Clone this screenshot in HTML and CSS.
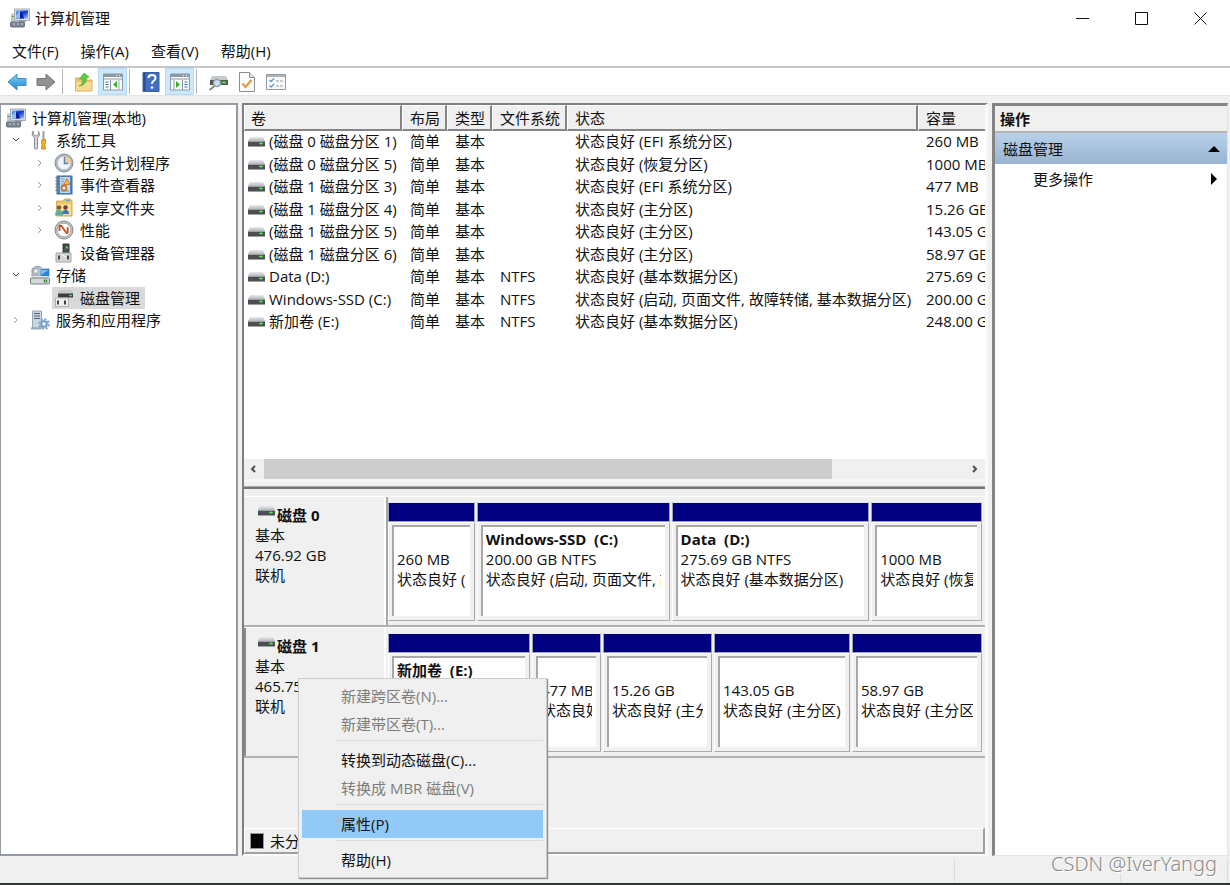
FILE: index.html
```
<!DOCTYPE html>
<html lang="zh-CN">
<head>
<meta charset="utf-8">
<title>计算机管理</title>
<link rel="stylesheet" href="styles.css">
</head>
<body>
<svg class="defs" aria-hidden="true">
  <defs>
    <linearGradient id="g-blue" x1="0" y1="0" x2="1" y2="1"><stop offset="0" stop-color="#7db8f5"/><stop offset=".45" stop-color="#0a2fd0"/><stop offset="1" stop-color="#9ccbf8"/></linearGradient>
    <linearGradient id="g-arrow" x1="0" y1="0" x2="0" y2="1"><stop offset="0" stop-color="#7fd0f8"/><stop offset="1" stop-color="#1f86d8"/></linearGradient>
    <linearGradient id="g-metal" x1="0" y1="0" x2="0" y2="1"><stop offset="0" stop-color="#e8eaec"/><stop offset="1" stop-color="#b4b8bc"/></linearGradient>
  </defs>
  <symbol id="i-computer" viewBox="0 0 20 20">
    <path d="M1 6l4-1v9H1z" fill="#c4c8cc"/><path d="M1.500 8.500h2" stroke="#3ca83c"/>
    <path d="M4.500 1h15v11.500h-15z" fill="#d6dde4" stroke="#a4acb4"/><path d="M6 2.500h12v8H6z" fill="url(#g-blue)"/>
    <path d="M11 2.500l3 8h-5z" fill="#0b1e90"/><path d="M6 7l4-4.500v8H6z" fill="#8fbef2"/>
    <path d="M9 12h7v2H9z" fill="#9aa2aa"/>
    <rect x=".5" y="14" width="14" height="5" rx="1" fill="#7b858f" stroke="#68727c"/><path d="M3 16h2m2 0h2m2 0h2" stroke="#d0d6dc"/>
  </symbol>
  <symbol id="i-tools" viewBox="0 0 20 20">
    <path d="M3 1L2 5l2.500 3v10.500q1.500 1.500 3 0V8L9.500 5 8.500 1v3.500L6 6 3.500 4.500z" fill="#d4d7d9" stroke="#8c9194"/>
    <path d="M13.500 1v9" stroke="#9a9fa4" stroke-width="2"/><path d="M12 9.500h3.500v3l-.5 2 .5 4.500h-4l.5-4.500-.5-2z" fill="#f0ac28" stroke="#d09222"/>
  </symbol>
  <symbol id="i-clock" viewBox="0 0 20 20">
    <circle cx="10" cy="10" r="9" fill="#b7bcc2" stroke="#868d95"/><circle cx="10" cy="10" r="7" fill="#f1f4f8" stroke="#a3adb8"/>
    <path d="M10 10V3a7 7 0 0 1 7 7z" fill="#f6cd96"/><path d="M10.500 4v6.500h4" fill="none" stroke="#5a84b4" stroke-width="1.500"/>
  </symbol>
  <symbol id="i-event" viewBox="0 0 20 20">
    <rect x="3" y="1" width="15" height="18" fill="#4f86b9" stroke="#3f6f9c"/><rect x="6" y="2" width="10" height="16" fill="#c4dcf2"/>
    <path d="M7 4h4M7 6.500h3M7 9h3M7 16h8" stroke="#7d9cbb"/><path d="M1.500 3h3m-3 3h3m-3 3h3m-3 3h3m-3 3h3" stroke="#6e7b88" stroke-width="1.500"/>
    <path d="M13 3.500l3 6h-6z" fill="#f4b64a" stroke="#c98530"/><circle cx="10" cy="13" r="2.500" fill="#fff" stroke="#c4752b" stroke-width="1.800"/>
  </symbol>
  <symbol id="i-share" viewBox="0 0 20 20">
    <path d="M2.500 3h7l1-2h6l1.500 2v15H2.500z" fill="#f2c562" stroke="#d5ab58"/><path d="M3 6h14v11H3z" fill="#fbdd92"/><path d="M12 2.500h4" stroke="#4db0e8" stroke-width="1.500"/>
    <circle cx="5" cy="9.500" r="2.200" fill="#7e5c35"/><circle cx="11.500" cy="9.500" r="2.200" fill="#5e4630"/>
    <path d="M1 17.500q0-5.500 4-5.500t4 5.500z" fill="#54b19e"/><path d="M8 16q0-4 3.500-4t3.500 4z" fill="#4672b8"/>
  </symbol>
  <symbol id="i-perf" viewBox="0 0 20 20">
    <circle cx="10" cy="10" r="9" fill="#c9ccd0" stroke="#80858b"/><circle cx="10" cy="10" r="7" fill="#fff" stroke="#9d9590"/>
    <path d="M5.500 11V6h2l5 7q2 1 1-6" fill="none" stroke="#bb5324" stroke-width="1.800"/>
  </symbol>
  <symbol id="i-device" viewBox="0 0 20 20">
    <path d="M9 1h6v9H9z" fill="#4a4f52" stroke="#323638"/><path d="M12 4.500h2" stroke="#55e055" stroke-width="2"/>
    <path d="M2 10h15v9H2z" fill="#d3d6d8" stroke="#a2a6aa"/><path d="M5 12.500v4m9-4v4" stroke="#46494c" stroke-width="2"/><path d="M7.500 11l4 3" stroke="#fff"/>
  </symbol>
  <symbol id="i-storage" viewBox="0 0 20 20">
    <path d="M2 7V4q5-5 10-1v8H2z" fill="#b9bec3" stroke="#969ca2"/><circle cx="6" cy="6" r="2.500" fill="#e9edf0" stroke="#9ca2a8"/>
    <path d="M10 3.500h9.500v8H10z" fill="#2d83d2" stroke="#b9d2e8"/><path d="M11 5h7.500L11 10z" fill="#75bdf2"/>
    <path d="M2 11h15l2 3H.500z" fill="#e2e4e6"/><rect x=".5" y="13" width="19" height="6" rx="1" fill="#d5d8db" stroke="#777d82"/><path d="M14.500 14.500v3m2-3v3" stroke="#2b742f" stroke-width="1.300"/>
  </symbol>
  <symbol id="i-diskmgmt" viewBox="0 0 20 20">
    <path d="M5 2h13l1 4H4z" fill="#c6c9cb"/><path d="M4 5.500h15v4H4z" fill="#3a3d40"/><path d="M15 7.500h3" stroke="#4fd24f" stroke-width="1.500"/>
    <path d="M1.500 10h13v8.500h-13z" fill="#eceeef" stroke="#adb0b3"/><path d="M4 12.500v4m7-4v4" stroke="#404244" stroke-width="2"/>
  </symbol>
  <symbol id="i-services" viewBox="0 0 20 20">
    <path d="M2.500 1h9v17h-9z" fill="#cbd5de" stroke="#9aa9b8"/><path d="M4 3.500h6M4 6h6M4 8.500h6" stroke="#51677c" stroke-width="1.200"/><path d="M1 18.500h10" stroke="#9aa9b8" stroke-width="2"/>
    <circle cx="14" cy="14" r="4.800" fill="none" stroke="#7faad4" stroke-width="2" stroke-dasharray="2.300 1.400"/><circle cx="14" cy="14" r="3" fill="#a9cbea" stroke="#6f9bc5" stroke-width="1.500"/><circle cx="14" cy="14" r="1.200" fill="#fff"/>
  </symbol>
  <symbol id="i-drive" viewBox="0 0 17 10">
    <path d="M2 0h13l2 4H0z" fill="url(#g-metal)"/><path d="M0 4h17v5H0z" fill="#4b4f52"/><path d="M0 4.500h17M0 9.500h17" stroke="#9da1a4"/><path d="M11 6.500h4M13 5v3" stroke="#4ee04e"/>
  </symbol>
  <symbol id="i-back" viewBox="0 0 20 18"><path d="M1 9l9-8v4.500h9v7h-9V17z" fill="url(#g-arrow)" stroke="#4a8cc2"/></symbol>
  <symbol id="i-fwd" viewBox="0 0 20 18"><path d="M19 9l-9-8v4.500H1v7h9V17z" fill="#929292" stroke="#757575"/></symbol>
  <symbol id="i-up" viewBox="0 0 20 20">
    <path d="M1.500 6h6l1.500 2h9v11h-16.500z" fill="#efc36a" stroke="#dab05c"/><path d="M2 10h15.500v8.500H2z" fill="#f8d990"/>
    <path d="M5 14q4-1 3.500-7H5.500L10 1l5 4-2.500 1q0 7-7.500 8z" fill="#5ecb3c" stroke="#4ba838" stroke-width=".7"/>
  </symbol>
  <symbol id="i-pane-l" viewBox="0 0 20 18">
    <path d="M.5 1h19v16H.5z" fill="#fafcfd" stroke="#8e99a4"/><path d="M1 2.500h18" stroke="#8b98a5" stroke-width="3"/><path d="M13 2.500h1m2 0h1" stroke="#fff"/><path d="M1 6h18M7.500 7v10" stroke="#8e99a4"/>
    <path d="M2.500 9h3m-3 2.500h3m-3 2.500h3" stroke="#3978b8"/><path d="M14 8v7l-4-3.500z" fill="#37b32b"/><path d="M16 7v10" stroke="#a0abb5"/>
  </symbol>
  <symbol id="i-pane-r" viewBox="0 0 20 18">
    <path d="M.5 1h19v16H.5z" fill="#fafcfd" stroke="#8e99a4"/><path d="M1 2.500h18" stroke="#8b98a5" stroke-width="3"/><path d="M13 2.500h1m2 0h1" stroke="#fff"/><path d="M1 6h18M12.500 7v10M4 7v10" stroke="#8995a2"/>
    <path d="M14.500 9h3m-3 2.500h3m-3 2.500h3" stroke="#3978b8"/><path d="M6 8v7l4-3.500z" fill="#37b32b"/>
  </symbol>
  <symbol id="i-help" viewBox="0 0 18 20">
    <path d="M1 .5h16v19H1z" fill="#3f6fc4" stroke="#3d5c98"/><path d="M2.500 1v18" stroke="#284a90" stroke-width="2"/>
    <path d="M6.500 6q0-3 3.500-3t3.500 3q0 1.800-2 3Q10 10 10 12" fill="none" stroke="#fff" stroke-width="2"/><circle cx="10" cy="15.500" r="1.300" fill="#fff"/>
  </symbol>
  <symbol id="i-find" viewBox="0 0 20 20">
    <path d="M4 4h14l2 4H2z" fill="#c6cacd"/><path d="M2 8h18v5H2z" fill="#55585b"/><path d="M14 10.500h4" stroke="#49dc49" stroke-width="2"/>
    <circle cx="9" cy="11" r="3.500" fill="#c9e3ee" stroke="#929ea6" stroke-width="1.500"/><path d="M6.500 14L1.500 18" stroke="#888" stroke-width="2"/>
  </symbol>
  <symbol id="i-check" viewBox="0 0 16 20">
    <path d="M.5.500h10l5 5v14H.5z" fill="#fbfbfb" stroke="#8d8d8d"/><path d="M10.500.500v5h5" fill="#e3e3e3" stroke="#8d8d8d"/><path d="M3.500 11.500l3 3.500 6-7" fill="none" stroke="#e59a45" stroke-width="2.200"/>
  </symbol>
  <symbol id="i-list" viewBox="0 0 20 16">
    <path d="M.5.500h19v15H.500z" fill="#f8f9fa" stroke="#93999f"/><path d="M1 2h18" stroke="#adb3b8" stroke-width="2"/>
    <path d="M3.500 6l1.500 1.500L8 4.500m-4.500 7L5 13l3-3" fill="none" stroke="#5a9bd8" stroke-width="1.300"/><path d="M10 7h3m1 0h3m-7 5h3m1 0h3" stroke="#969da4"/>
  </symbol>
</svg>

<div class="window">
  <header class="titlebar">
    <svg class="icon"><use href="#i-computer"/></svg>
    <h1 class="title">计算机管理</h1>
    <div class="caption-buttons">
      <button class="caption" aria-label="最小化"><svg viewBox="0 0 13 13"><path d="M0 6.500h13"/></svg></button>
      <button class="caption" aria-label="最大化"><svg viewBox="0 0 13 13"><path d="M.5.500h12v12H.500z"/></svg></button>
      <button class="caption" aria-label="关闭"><svg viewBox="0 0 13 13"><path d="M.5.500l12 12m0-12l-12 12"/></svg></button>
    </div>
  </header>
  <nav class="menubar">
    <button>文件(F)</button><button>操作(A)</button><button>查看(V)</button><button>帮助(H)</button>
  </nav>
  <div class="toolbar">
    <button aria-label="后退"><svg class="icon"><use href="#i-back"/></svg></button>
    <button aria-label="前进"><svg class="icon"><use href="#i-fwd"/></svg></button>
    <span class="tool-sep"></span>
    <button aria-label="上移"><svg class="icon"><use href="#i-up"/></svg></button>
    <button class="pressed" aria-label="控制台树"><svg class="icon"><use href="#i-pane-l"/></svg></button>
    <span class="tool-sep"></span>
    <button aria-label="帮助"><svg class="icon"><use href="#i-help"/></svg></button>
    <button class="pressed" aria-label="操作窗格"><svg class="icon"><use href="#i-pane-r"/></svg></button>
    <span class="tool-sep"></span>
    <button aria-label="重新扫描"><svg class="icon"><use href="#i-find"/></svg></button>
    <button aria-label="属性"><svg class="icon"><use href="#i-check"/></svg></button>
    <button aria-label="设置"><svg class="icon"><use href="#i-list"/></svg></button>
  </div>

  <main class="workspace">
    <ul class="tree">
      <li><svg class="icon"><use href="#i-computer"/></svg><span class="name">计算机管理(本地)</span></li>
      <li class="level1"><svg class="twist open" viewBox="0 0 10 10"><path d="M2 3l3 3 3-3"/></svg><svg class="icon"><use href="#i-tools"/></svg><span class="name">系统工具</span></li>
      <li class="level2"><svg class="twist" viewBox="0 0 10 10"><path d="M3 2l3 3-3 3"/></svg><svg class="icon"><use href="#i-clock"/></svg><span class="name">任务计划程序</span></li>
      <li class="level2"><svg class="twist" viewBox="0 0 10 10"><path d="M3 2l3 3-3 3"/></svg><svg class="icon"><use href="#i-event"/></svg><span class="name">事件查看器</span></li>
      <li class="level2"><svg class="twist" viewBox="0 0 10 10"><path d="M3 2l3 3-3 3"/></svg><svg class="icon"><use href="#i-share"/></svg><span class="name">共享文件夹</span></li>
      <li class="level2"><svg class="twist" viewBox="0 0 10 10"><path d="M3 2l3 3-3 3"/></svg><svg class="icon"><use href="#i-perf"/></svg><span class="name">性能</span></li>
      <li class="level2"><span class="twist"></span><svg class="icon"><use href="#i-device"/></svg><span class="name">设备管理器</span></li>
      <li class="level1"><svg class="twist open" viewBox="0 0 10 10"><path d="M2 3l3 3 3-3"/></svg><svg class="icon"><use href="#i-storage"/></svg><span class="name">存储</span></li>
      <li class="level2"><span class="twist"></span><span class="selected"><svg class="icon"><use href="#i-diskmgmt"/></svg><span class="name">磁盘管理</span></span></li>
      <li class="level1"><svg class="twist" viewBox="0 0 10 10"><path d="M3 2l3 3-3 3"/></svg><svg class="icon"><use href="#i-services"/></svg><span class="name">服务和应用程序</span></li>
    </ul>

    <section class="center">
      <div class="volumes">
        <div class="table-wrap">
          <table>
            <colgroup><col class="c-vol"><col class="c-layout"><col class="c-type"><col class="c-fs"><col class="c-state"><col class="c-size"></colgroup>
            <thead><tr><th>卷</th><th>布局</th><th>类型</th><th>文件系统</th><th>状态</th><th>容量</th></tr></thead>
            <tbody>
              <tr><td><svg class="drive"><use href="#i-drive"/></svg>(磁盘 0 磁盘分区 1)</td><td>简单</td><td>基本</td><td></td><td>状态良好 (EFI 系统分区)</td><td>260 MB</td></tr>
              <tr><td><svg class="drive"><use href="#i-drive"/></svg>(磁盘 0 磁盘分区 5)</td><td>简单</td><td>基本</td><td></td><td>状态良好 (恢复分区)</td><td>1000 MB</td></tr>
              <tr><td><svg class="drive"><use href="#i-drive"/></svg>(磁盘 1 磁盘分区 3)</td><td>简单</td><td>基本</td><td></td><td>状态良好 (EFI 系统分区)</td><td>477 MB</td></tr>
              <tr><td><svg class="drive"><use href="#i-drive"/></svg>(磁盘 1 磁盘分区 4)</td><td>简单</td><td>基本</td><td></td><td>状态良好 (主分区)</td><td>15.26 GB</td></tr>
              <tr><td><svg class="drive"><use href="#i-drive"/></svg>(磁盘 1 磁盘分区 5)</td><td>简单</td><td>基本</td><td></td><td>状态良好 (主分区)</td><td>143.05 GB</td></tr>
              <tr><td><svg class="drive"><use href="#i-drive"/></svg>(磁盘 1 磁盘分区 6)</td><td>简单</td><td>基本</td><td></td><td>状态良好 (主分区)</td><td>58.97 GB</td></tr>
              <tr><td><svg class="drive"><use href="#i-drive"/></svg>Data (D:)</td><td>简单</td><td>基本</td><td>NTFS</td><td>状态良好 (基本数据分区)</td><td>275.69 GB</td></tr>
              <tr><td><svg class="drive"><use href="#i-drive"/></svg>Windows-SSD (C:)</td><td>简单</td><td>基本</td><td>NTFS</td><td>状态良好 (启动, 页面文件, 故障转储, 基本数据分区)</td><td>200.00 GB</td></tr>
              <tr><td><svg class="drive"><use href="#i-drive"/></svg>新加卷 (E:)</td><td>简单</td><td>基本</td><td>NTFS</td><td>状态良好 (基本数据分区)</td><td>248.00 GB</td></tr>
            </tbody>
          </table>
        </div>
        <div class="scrollbar">
          <button aria-label="向左滚动"><svg viewBox="0 0 10 10"><path d="M6 2L3 5l3 3"/></svg></button>
          <div class="track"><div class="thumb"></div></div>
          <button aria-label="向右滚动"><svg viewBox="0 0 10 10"><path d="M3 2l3 3-3 3"/></svg></button>
        </div>
        <div class="splitter"></div>
      </div>

      <div class="disks">
        <article class="disk">
          <div class="disk-label">
            <h2><svg class="drive"><use href="#i-drive"/></svg>磁盘 0</h2>
            <p>基本</p><p>476.92 GB</p><p>联机</p>
          </div>
          <div class="partitions">
            <div class="part" style="flex-grow:87"><div class="bar"></div><div class="body"><div class="info"><b></b><p>260 MB</p><p>状态良好 (EFI 系统分区)</p></div></div></div>
            <div class="part" style="flex-grow:193"><div class="bar"></div><div class="body"><div class="info"><b>Windows-SSD&nbsp; (C:)</b><p>200.00 GB NTFS</p><p>状态良好 (启动, 页面文件, 故障转储)</p></div></div></div>
            <div class="part" style="flex-grow:198"><div class="bar"></div><div class="body"><div class="info"><b>Data&nbsp; (D:)</b><p>275.69 GB NTFS</p><p>状态良好 (基本数据分区)</p></div></div></div>
            <div class="part" style="flex-grow:111"><div class="bar"></div><div class="body"><div class="info"><b></b><p>1000 MB</p><p>状态良好 (恢复分区)</p></div></div></div>
          </div>
        </article>
        <article class="disk active">
          <div class="disk-label">
            <h2><svg class="drive"><use href="#i-drive"/></svg>磁盘 1</h2>
            <p>基本</p><p>465.75 GB</p><p>联机</p>
          </div>
          <div class="partitions">
            <div class="part" style="flex-grow:142"><div class="bar"></div><div class="body"><div class="info"><b>新加卷&nbsp; (E:)</b></div></div></div>
            <div class="part" style="flex-grow:69"><div class="bar"></div><div class="body"><div class="info"><b></b><p>477 MB</p><p>状态良好 (EFI 系统分区)</p></div></div></div>
            <div class="part" style="flex-grow:109"><div class="bar"></div><div class="body"><div class="info"><b></b><p>15.26 GB</p><p>状态良好 (主分区)</p></div></div></div>
            <div class="part" style="flex-grow:136"><div class="bar"></div><div class="body"><div class="info"><b></b><p>143.05 GB</p><p>状态良好 (主分区)</p></div></div></div>
            <div class="part" style="flex-grow:130"><div class="bar"></div><div class="body"><div class="info"><b></b><p>58.97 GB</p><p>状态良好 (主分区)</p></div></div></div>
          </div>
        </article>
        <div class="legend"><span class="swatch"></span>未分配</div>

        <div class="context-menu" role="menu">
          <button role="menuitem" disabled>新建跨区卷(N)...</button>
          <button role="menuitem" disabled>新建带区卷(T)...</button>
          <hr>
          <button role="menuitem">转换到动态磁盘(C)...</button>
          <button role="menuitem" disabled>转换成 MBR 磁盘(V)</button>
          <hr>
          <button role="menuitem" class="hover">属性(P)</button>
          <hr>
          <button role="menuitem">帮助(H)</button>
        </div>
      </div>
    </section>

    <aside class="actions">
      <h2>操作</h2>
      <button class="group">磁盘管理<svg viewBox="0 0 12 12"><path d="M0 9l6-6 6 6z"/></svg></button>
      <button class="more">更多操作<svg viewBox="0 0 12 12"><path d="M3 0l6 6-6 6z"/></svg></button>
    </aside>
  </main>

  <footer class="statusbar">
    <span class="pane main"></span><span class="pane"></span><span class="pane small"></span>
    <span class="watermark">CSDN @IverYangg</span>
  </footer>
</div>
</body>
</html>
```

FILE: styles.css
```
* { box-sizing: border-box; }
body {
  margin: 0;
  color: #111;
  background: #f0f0f0;
  font: 15px/20px "Open Sans", "Noto Sans CJK SC", sans-serif;
}
h1, h2, p, ul { margin: 0; padding: 0; font-size: 15px; font-weight: 400; }
button { margin: 0; padding: 0; border: 0; background: none; color: inherit; font: inherit; }
svg { display: block; flex: none; }
.defs { position: absolute; width: 0; height: 0; }
.icon { width: 20px; height: 20px; }
.drive { width: 17px; height: 10px; }

.window {
  display: flex;
  flex-direction: column;
  min-height: 100vh;
  border-bottom: 2px solid #303533;
}

.titlebar { display: flex; align-items: center; height: 36px; padding-left: 10px; background: #fff; }
.title { margin-left: 5px; }
.caption-buttons { display: flex; margin-left: auto; }
.caption { display: flex; align-items: center; justify-content: center; width: 59px; height: 36px; }
.caption svg { width: 13px; height: 13px; fill: none; stroke: #111; }

.menubar { display: flex; gap: 22px; height: 32px; padding: 0 0 1px 12px; background: #fff; border-bottom: 2px solid #c3c6cb; }

.toolbar { display: flex; height: 28px; padding-left: 2px; background: #fff; border-bottom: 1px solid #e4e4e4; }
.toolbar button { display: flex; align-items: center; justify-content: center; width: 29px; }
.toolbar .pressed { background: #cce8ff; border: 1px solid #b4dcf8; }
.tool-sep { width: 9px; padding: 1px 0; }
.tool-sep::before { content: ""; display: block; width: 1px; height: 25px; margin-left: 2px; background: #b5b5b5; }

.workspace { display: grid; grid-template-columns: 238px minmax(0, 1fr) 236px; column-gap: 4px; flex: 1; padding: 7px 2px 0 0; }

.tree { list-style: none; padding-top: 1px; background: #fff; border: 2px solid #969aa4; border-left-width: 1px; }
.tree li { display: flex; align-items: center; height: 22px; padding-left: 5px; }
.tree li:nth-child(odd), tbody tr:nth-child(even) { height: 23px; }
.tree li:nth-child(even) { height: 22px; }
.tree .level1 { padding-left: 10px; }
.tree .level2 { padding-left: 34px; }
.name { margin-left: 6px; }
.twist { flex: none; width: 10px; height: 10px; margin-right: 9px; fill: none; stroke: #9a9a9a; }
.twist.open { stroke: #404040; }
.selected { display: flex; align-items: center; height: 22px; margin-left: -2px; padding: 0 5px 0 2px; background: #d9d9d9; }

.center { display: flex; flex-direction: column; border-left: 2px solid #808080; border-top: 2px solid #808080; border-right: 3px solid #fafafa; border-bottom: 2px solid #fafafa; }
.volumes { display: flex; flex-direction: column; height: 384px; background: #fff; border-bottom: 2px solid #747474; }
.table-wrap { flex: 1; overflow: hidden; }
table { width: 774px; table-layout: fixed; border-spacing: 0; border-collapse: separate; }
.c-vol { width: 158px; }
.c-layout, .c-type { width: 45px; }
.c-fs { width: 75px; }
.c-state { width: 351px; }
.c-size { width: 100px; }
th { height: 26px; padding: 0 0 0 7px; text-align: left; font-weight: 400; background: #f0f0f0; border: 1px solid #fff; border-right: 2px solid #858585; border-bottom: 2px solid #858585; }
th:first-child { padding-left: 6px; }
tbody tr { height: 22px; }
td { padding: 0 0 0 8px; line-height: 20px; padding-bottom: 2px; white-space: nowrap; }
td:first-child { padding-left: 4px; }
td .drive { display: inline-block; margin-right: 4px; }

.scrollbar { display: flex; height: 20px; background: #f0f0f0; }
.scrollbar button { display: flex; align-items: center; justify-content: center; width: 20px; }
.scrollbar svg { width: 10px; height: 10px; fill: none; stroke: #505050; stroke-width: 2; }
.track { flex: 1; }
.thumb { width: 81%; height: 20px; background: #cdcdcd; }
.splitter { height: 8px; background: #f0f0f0; border-bottom: 1px solid #a8a8a8; box-shadow: inset 0 3px #f6f6f6; }

.disks { position: relative; display: flex; flex-direction: column; flex: 1; padding-top: 7px; }
.disk { display: flex; height: 131px; border-top: 1px solid #fff; border-bottom: 2px solid #b2b2b2; }
.disk-label { width: 142px; padding: 8px 0 0 11px; border-right: 2px solid #fff; box-shadow: 2px 0 #a8a8a8; }
.disk-label h2 { display: flex; align-items: flex-start; gap: 2px; padding-left: 3px; font-weight: 700; }
.disk-label .drive { margin-top: 1px; }
.disk-label p { line-height: 20px; }
.active .disk-label { border-left: 2px solid #8c8c8c; padding-left: 9px; box-shadow: none; }
.partitions { display: flex; flex: 1; gap: 2px; min-width: 0; padding: 5px 3px 4px 2px; }
.part { display: flex; flex-direction: column; flex: 1 1 0; min-width: 0; }
.bar { height: 20px; background: #000080; border: 1px solid #a0a0b8; border-top-color: #e8e8f0; }
.body { flex: 1; min-height: 0; padding: 2px 4px 4px 3px; border: 1px solid #aaa; border-left-color: #fff; border-top-color: #fff; }
.info { height: 100%; padding: 2px 4px 0 3px; background: #fff; border-top: 2px solid #a8a8a8; border-left: 2px solid #a8a8a8; }
.info b { display: block; height: 20px; white-space: nowrap; overflow: hidden; }
.info p { line-height: 20px; height: 20px; white-space: nowrap; overflow: hidden; }
.legend { display: flex; align-items: center; gap: 6px; height: 26px; margin-top: auto; padding-left: 5px; border: 1px solid #fff; border-right: 2px solid #a0a0a0; border-bottom: 2px solid #a0a0a0; }
.swatch { width: 14px; height: 16px; background: #050507; border: 1px solid #999; }

.context-menu { position: absolute; left: 54px; top: 189px; z-index: 2; width: 249px; padding: 3px; background: #f0f0f0; border: 1px solid #ccc; box-shadow: 1px 1px 1px #909090; }
.context-menu button { display: block; width: 241px; height: 28px; padding-left: 39px; text-align: left; white-space: nowrap; }
.context-menu button:disabled { color: #7d7d7d; }
.context-menu .hover { background: #91c9f7; }
.context-menu hr { height: 8px; margin: 0 0 0 34px; border: 0; background: linear-gradient(#dadada, #dadada) 0 2px / 100% 1px no-repeat; }

.actions { background: #fff; border: 1px solid #e4e4e4; border-left: 3px solid #858585; border-top: 3px solid #858585; }
.actions h2 { height: 27px; padding: 3px 0 0 5px; font-weight: 700; background: #f0f0f0; border-bottom: 2px solid #b4b4b4; }
.actions button { display: flex; align-items: center; justify-content: space-between; width: 100%; height: 31px; padding: 0 7px 0 8px; }
.actions svg { width: 12px; height: 12px; fill: #000; }
.actions .group { background: linear-gradient(#b9d1ea, #99b4d1); }
.actions .more { height: 29px; padding-left: 38px; }

.statusbar { position: relative; display: flex; height: 27px; padding: 2px 2px 1px 0; }
.pane { width: 166px; border-right: 1px solid #dcdcdc; }
.pane.main { flex: 1; }
.pane.small { width: 107px; }
.watermark { position: absolute; right: 13px; top: -4px; font-family: "Noto Sans", sans-serif; font-weight: 300; font-size: 20px; line-height: 24px; color: #8c8c8c; text-shadow: 1px 1px #fff; }
```
